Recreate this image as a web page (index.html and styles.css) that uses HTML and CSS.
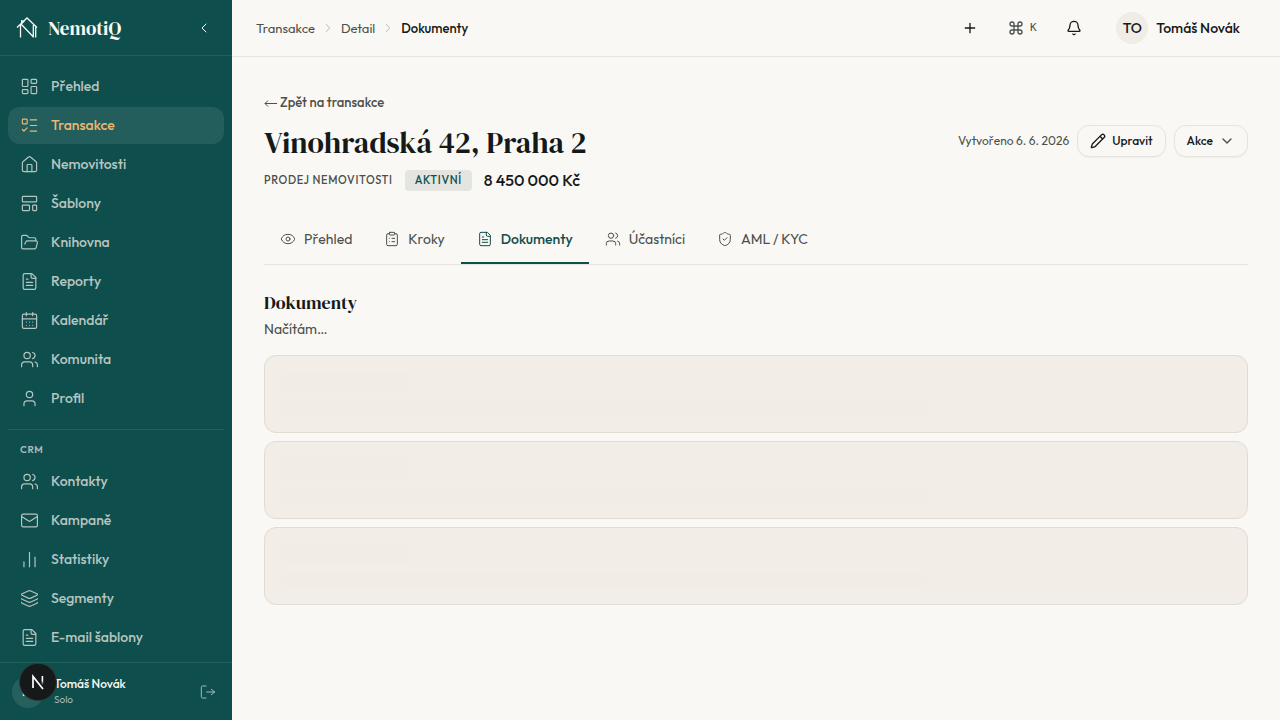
FILE: index.html
```html
<!DOCTYPE html>
<html lang="cs">
<head>
<meta charset="utf-8">
<meta name="viewport" content="width=device-width, initial-scale=1">
<title>NemotiQ – Dokumenty</title>
<link rel="stylesheet" href="styles.css">
</head>
<body>
<svg class="sprite" aria-hidden="true">
  <symbol id="dashboard" viewBox="0 0 24 24"><rect x="3" y="3" width="7" height="9" rx="1"/><rect x="14" y="3" width="7" height="5" rx="1"/><rect x="14" y="12" width="7" height="9" rx="1"/><rect x="3" y="16" width="7" height="5" rx="1"/></symbol>
  <symbol id="todo" viewBox="0 0 24 24"><rect x="3" y="4" width="6" height="6" rx="1"/><path d="m3 17 2 2 4-4M13 5h8M13 12h8M13 19h8"/></symbol>
  <symbol id="house" viewBox="0 0 24 24"><path d="M15 21v-8a1 1 0 0 0-1-1h-4a1 1 0 0 0-1 1v8"/><path d="M3 10a2 2 0 0 1 .709-1.528l7-6a2 2 0 0 1 2.582 0l7 6A2 2 0 0 1 21 10v9a2 2 0 0 1-2 2H5a2 2 0 0 1-2-2z"/></symbol>
  <symbol id="template" viewBox="0 0 24 24"><rect x="3" y="3" width="18" height="7" rx="1"/><rect x="3" y="14" width="9" height="7" rx="1"/><rect x="16" y="14" width="5" height="7" rx="1"/></symbol>
  <symbol id="folder" viewBox="0 0 24 24"><path d="m6 14 1.5-2.9A2 2 0 0 1 9.24 10H20a2 2 0 0 1 1.94 2.5l-1.54 6a2 2 0 0 1-1.95 1.5H4a2 2 0 0 1-2-2V5a2 2 0 0 1 2-2h3.9a2 2 0 0 1 1.69.9l.81 1.2a2 2 0 0 0 1.67.9H18a2 2 0 0 1 2 2v2"/></symbol>
  <symbol id="file" viewBox="0 0 24 24"><path d="M15 2H6a2 2 0 0 0-2 2v16a2 2 0 0 0 2 2h12a2 2 0 0 0 2-2V7Z"/><path d="M14 2v4a2 2 0 0 0 2 2h4M10 9H8M16 13H8M16 17H8"/></symbol>
  <symbol id="calendar" viewBox="0 0 24 24"><rect x="3" y="4" width="18" height="18" rx="2"/><path d="M8 2v4M16 2v4M3 10h18M8 14h.01M12 14h.01M16 14h.01M8 18h.01M12 18h.01M16 18h.01"/></symbol>
  <symbol id="users" viewBox="0 0 24 24"><path d="M16 21v-2a4 4 0 0 0-4-4H6a4 4 0 0 0-4 4v2"/><circle cx="9" cy="7" r="4"/><path d="M22 21v-2a4 4 0 0 0-3-3.87M16 3.13a4 4 0 0 1 0 7.75"/></symbol>
  <symbol id="user" viewBox="0 0 24 24"><path d="M19 21v-2a4 4 0 0 0-4-4H9a4 4 0 0 0-4 4v2"/><circle cx="12" cy="7" r="4"/></symbol>
  <symbol id="mail" viewBox="0 0 24 24"><rect x="2" y="4" width="20" height="16" rx="2"/><path d="m22 7-8.97 5.7a1.94 1.94 0 0 1-2.06 0L2 7"/></symbol>
  <symbol id="chart" viewBox="0 0 24 24"><path d="M5 21v-6M12 21V3M19 21V9"/></symbol>
  <symbol id="layers" viewBox="0 0 24 24"><path d="M12.83 2.18a2 2 0 0 0-1.66 0L2.6 6.08a1 1 0 0 0 0 1.83l8.58 3.91a2 2 0 0 0 1.66 0l8.58-3.9a1 1 0 0 0 0-1.83z"/><path d="M2 12a1 1 0 0 0 .58.91l8.6 3.91a2 2 0 0 0 1.65 0l8.58-3.9A1 1 0 0 0 22 12"/><path d="M2 17a1 1 0 0 0 .58.91l8.6 3.91a2 2 0 0 0 1.65 0l8.58-3.9A1 1 0 0 0 22 17"/></symbol>
  <symbol id="logout" viewBox="0 0 24 24"><path d="m17 16 5-4-5-4M22 12H10M9 21H4a2 2 0 0 1-2-2V5a2 2 0 0 1 2-2h5"/></symbol>
  <symbol id="left" viewBox="0 0 24 24"><path d="m15 18-6-6 6-6"/></symbol>
  <symbol id="right" viewBox="0 0 24 24"><path d="m9 18 6-6-6-6"/></symbol>
  <symbol id="down" viewBox="0 0 24 24"><path d="m6 9 6 6 6-6"/></symbol>
  <symbol id="plus" viewBox="0 0 24 24"><path d="M5 12h14M12 5v14"/></symbol>
  <symbol id="command" viewBox="0 0 24 24"><path d="M15 6v12a3 3 0 1 0 3-3H6a3 3 0 1 0 3 3V6a3 3 0 1 0-3 3h12a3 3 0 1 0-3-3"/></symbol>
  <symbol id="bell" viewBox="0 0 24 24"><path d="M10.27 21a2 2 0 0 0 3.46 0M3.26 15.33A1 1 0 0 0 4 17h16a1 1 0 0 0 .74-1.67C19.41 13.96 18 12.5 18 8A6 6 0 0 0 6 8c0 4.5-1.41 5.96-2.74 7.33"/></symbol>
  <symbol id="pencil" viewBox="0 0 24 24"><path d="M21.17 6.81a1 1 0 0 0-3.99-3.99L3.84 16.17a2 2 0 0 0-.5.83l-1.32 4.35a.5.5 0 0 0 .62.62l4.35-1.32a2 2 0 0 0 .83-.5zM15 5l4 4"/></symbol>
  <symbol id="eye" viewBox="0 0 24 24"><path d="M2.06 12.35a1 1 0 0 1 0-.7 10.75 10.75 0 0 1 19.88 0 1 1 0 0 1 0 .7 10.75 10.75 0 0 1-19.88 0"/><circle cx="12" cy="12" r="3"/></symbol>
  <symbol id="clipboard" viewBox="0 0 24 24"><rect x="8" y="2" width="8" height="4" rx="1"/><path d="M16 4h2a2 2 0 0 1 2 2v14a2 2 0 0 1-2 2H6a2 2 0 0 1-2-2V6a2 2 0 0 1 2-2h2M12 11h4M12 16h4M8 11h.01M8 16h.01"/></symbol>
  <symbol id="shield" viewBox="0 0 24 24"><path d="M20 13c0 5-3.5 7.5-7.66 8.95a1 1 0 0 1-.67-.01C7.5 20.5 4 18 4 13V6a1 1 0 0 1 1-1c2 0 4.5-1.2 6.24-2.72a1.17 1.17 0 0 1 1.52 0C14.51 3.81 17 5 19 5a1 1 0 0 1 1 1zM9 12l2 2 4-4"/></symbol>
</svg>
<div class="app">
  <aside class="sidebar">
    <div class="brand">
      <svg class="brand-mark" viewBox="0 0 24 24" aria-hidden="true"><path d="M2 11.500 12 2l10 9.500M5.500 9v12.500M5.500 7.500 18 20.500M18.300 9v12.500M20.700 11v10.500" stroke-width="1.300"/><path d="M6 4v5l4-4z" class="solid"/></svg>
      <span class="brand-name">NemotiQ</span>
      <button class="bare collapse" type="button" aria-label="Sbalit menu"><svg class="icon"><use href="#left"/></svg></button>
    </div>
    <nav class="nav" aria-label="Hlavní menu">
      <a class="nav-item" href="#"><svg class="icon"><use href="#dashboard"/></svg>Přehled</a>
      <a class="nav-item current" href="#" aria-current="page"><svg class="icon"><use href="#todo"/></svg>Transakce</a>
      <a class="nav-item" href="#"><svg class="icon"><use href="#house"/></svg>Nemovitosti</a>
      <a class="nav-item" href="#"><svg class="icon"><use href="#template"/></svg>Šablony</a>
      <a class="nav-item" href="#"><svg class="icon"><use href="#folder"/></svg>Knihovna</a>
      <a class="nav-item" href="#"><svg class="icon"><use href="#file"/></svg>Reporty</a>
      <a class="nav-item" href="#"><svg class="icon"><use href="#calendar"/></svg>Kalendář</a>
      <a class="nav-item" href="#"><svg class="icon"><use href="#users"/></svg>Komunita</a>
      <a class="nav-item" href="#"><svg class="icon"><use href="#user"/></svg>Profil</a>
      <div class="nav-heading">CRM</div>
      <a class="nav-item" href="#"><svg class="icon"><use href="#users"/></svg>Kontakty</a>
      <a class="nav-item" href="#"><svg class="icon"><use href="#mail"/></svg>Kampaně</a>
      <a class="nav-item" href="#"><svg class="icon"><use href="#chart"/></svg>Statistiky</a>
      <a class="nav-item" href="#"><svg class="icon"><use href="#layers"/></svg>Segmenty</a>
      <a class="nav-item" href="#"><svg class="icon"><use href="#file"/></svg>E-mail šablony</a>
    </nav>
    <div class="account">
      <span class="account-avatar">TO</span>
      <div class="account-text"><div class="account-name">Tomáš Novák</div><div class="account-plan">Solo</div></div>
      <button class="bare signout" type="button" aria-label="Odhlásit"><svg class="icon"><use href="#logout"/></svg></button>
    </div>
  </aside>
  <div class="content">
    <header class="topbar">
      <nav class="crumbs" aria-label="Drobečková navigace">
        <a href="#">Transakce</a><svg class="icon"><use href="#right"/></svg>
        <a href="#">Detail</a><svg class="icon"><use href="#right"/></svg>
        <span class="crumb-current">Dokumenty</span>
      </nav>
      <div class="tools">
        <button class="bare tool" type="button" aria-label="Přidat"><svg class="icon"><use href="#plus"/></svg></button>
        <button class="bare search" type="button" aria-label="Hledat, K"><svg class="icon"><use href="#command"/></svg><kbd>K</kbd></button>
        <button class="bare tool" type="button" aria-label="Oznámení"><svg class="icon"><use href="#bell"/></svg></button>
        <button class="bare profile" type="button"><span class="avatar">TO</span>Tomáš Novák</button>
      </div>
    </header>
    <main class="main">
      <a class="back" href="#"><svg class="arrow" viewBox="0 0 14 14" aria-hidden="true"><path d="M13 7.500H1M4 4.500l-3 3 3 3"/></svg>Zpět na transakce</a>
      <div class="heading">
        <div class="summary">
          <h1>Vinohradská 42, Praha 2</h1>
          <div class="meta"><span class="kind">PRODEJ NEMOVITOSTI</span><span class="status">AKTIVNÍ</span><span class="price">8 450 000 Kč</span></div>
        </div>
        <div class="actions">
          <span class="created">Vytvořeno 6. 6. 2026</span>
          <button class="button" type="button"><svg class="icon"><use href="#pencil"/></svg>Upravit</button>
          <button class="button more" type="button">Akce<svg class="icon"><use href="#down"/></svg></button>
        </div>
      </div>
      <nav class="tabs" aria-label="Detail transakce">
        <a class="tab" href="#"><svg class="icon"><use href="#eye"/></svg>Přehled</a>
        <a class="tab" href="#"><svg class="icon"><use href="#clipboard"/></svg>Kroky</a>
        <a class="tab selected" href="#" aria-current="page"><svg class="icon"><use href="#file"/></svg>Dokumenty</a>
        <a class="tab" href="#"><svg class="icon"><use href="#users"/></svg>Účastníci</a>
        <a class="tab" href="#"><svg class="icon"><use href="#shield"/></svg>AML / KYC</a>
      </nav>
      <h2>Dokumenty</h2>
      <p class="loading">Načítám…</p>
      <div class="cards" aria-busy="true">
        <div class="card"><div class="bone short"></div><div class="bone long"></div></div>
        <div class="card"><div class="bone short"></div><div class="bone long"></div></div>
        <div class="card"><div class="bone short"></div><div class="bone long"></div></div>
      </div>
    </main>
  </div>
</div>
<button class="dev-badge" type="button" aria-label="Vývojářské nástroje"><svg viewBox="0 0 36 36"><defs><linearGradient id="fade" x1="0" y1="0" x2="0" y2="1"><stop offset=".5" stop-color="#fff"/><stop offset="1" stop-color="#fff" stop-opacity="0"/></linearGradient></defs><path d="M13 24V12.500L23 25" fill="none" stroke="#fff" stroke-width="1.700"/><rect x="21.600" y="12" width="1.600" height="9" fill="url(#fade)"/></svg></button>
</body>
</html>
```
FILE: styles.css
```css
* { box-sizing: border-box; }
body {
  margin: 0;
  font-family: Outfit, Lato, "Open Sans", sans-serif;
  font-size: 14px;
  line-height: 20px;
  color: #141a1a;
  background: #faf8f4;
}
a { color: inherit; text-decoration: none; }
.sprite { position: absolute; width: 0; height: 0; }
.icon {
  width: 16px;
  height: 16px;
  flex: none;
  fill: none;
  stroke: currentColor;
  stroke-width: 1.5;
  stroke-linecap: round;
  stroke-linejoin: round;
}
.bare {
  display: flex;
  align-items: center;
  justify-content: center;
  padding: 0;
  border: 0;
  background: none;
  color: inherit;
  font: inherit;
}
.app { display: flex; height: 100vh; }

.sidebar {
  display: flex;
  flex-direction: column;
  flex: none;
  width: 232px;
  background: #0e4f4d;
  color: #faf8f4;
}
.brand {
  display: flex;
  align-items: center;
  gap: 9px;
  flex: none;
  height: 56px;
  padding: 0 16px 0 15px;
  border-bottom: 1px solid #20605d;
}
.brand-mark { width: 24px; height: 24px; fill: none; stroke: currentColor; }
.brand-mark .solid { fill: currentColor; stroke: none; }
.brand-name {
  font: 400 19px/24px "DM Serif Display", "Liberation Serif", serif;
}
.collapse { width: 24px; height: 24px; margin-left: auto; }
.nav {
  display: flex;
  flex-direction: column;
  gap: 2px;
  flex: 1;
  min-height: 0;
  padding: 12px 8px;
  overflow: hidden;
}
.nav-item {
  display: flex;
  align-items: center;
  gap: 12px;
  flex: none;
  height: 37px;
  padding: 0 12px;
  border-radius: 12px;
  font-weight: 500;
  line-height: 19px;
  color: #b7c4c0;
}
.nav-item .icon { width: 19px; height: 19px; }
.nav-item.current { color: #e9b872; background: #245e5c; }
.nav-heading {
  flex: none;
  margin-top: 10px;
  padding: 12px 12px 4px;
  border-top: 1px solid #20605d;
  font-size: 10px;
  line-height: 15px;
  font-weight: 600;
  letter-spacing: 0.06em;
  color: #a9bbb8;
}
.account {
  display: flex;
  align-items: center;
  gap: 10px;
  flex: none;
  height: 58px;
  padding: 0 16px 0 12px;
  border-top: 1px solid #20605d;
}
.account-avatar {
  width: 32px;
  height: 32px;
  border-radius: 50%;
  background: #275f5c;
  font-size: 11px;
  line-height: 32px;
  font-weight: 600;
  text-align: center;
}
.account-text { flex: 1; }
.account-name { font-size: 12px; line-height: 16px; font-weight: 500; }
.account-plan { font-size: 10px; line-height: 15px; color: #9fb5b2; }
.signout { color: #a4b9b6; }

.content { flex: 1; min-width: 0; overflow: auto; }
.topbar {
  display: flex;
  align-items: center;
  justify-content: space-between;
  height: 57px;
  padding: 0 24px;
  border-bottom: 1px solid #e6e4df;
}
.crumbs { display: flex; align-items: center; gap: 6px; font-size: 13px; line-height: 20px; color: #4a504d; }
.crumbs .icon { width: 14px; height: 14px; color: #a9b0ac; }
.crumb-current { font-weight: 500; color: #141a1a; }
.tools { display: flex; align-items: center; gap: 16px; color: #141a1a; }
.tools .icon { stroke-width: 2; }
.tool { width: 36px; height: 36px; }
.search { gap: 6px; width: 36px; height: 36px; color: #4a504d; }
.search kbd { font: 11px/18px "DejaVu Sans Mono", monospace; }
.profile { gap: 8px; margin-left: 8px; padding-right: 16px; font-weight: 500; color: #141a1a; }
.avatar {
  width: 32px;
  height: 32px;
  border-radius: 50%;
  background: #f0ece6;
  line-height: 32px;
  text-align: center;
}

.main { padding: 36px 32px; }
.back {
  display: flex;
  align-items: center;
  gap: 2px;
  width: max-content;
  font-size: 13px;
  line-height: 19px;
  font-weight: 500;
  color: #4a504d;
}
.arrow { width: 14px; height: 14px; fill: none; stroke: currentColor; }
.heading { display: flex; align-items: flex-start; justify-content: space-between; margin-top: 11px; }
h1, h2 { margin: 0; font-family: "DM Serif Display", "Liberation Serif", serif; font-weight: 400; }
h1 { font-size: 30px; line-height: 40px; }
.actions { display: flex; align-items: center; gap: 8px; padding-top: 2px; }
.created { font-size: 12px; color: #4a504d; }
.button {
  display: flex;
  align-items: center;
  gap: 6px;
  height: 32px;
  padding: 0 12px;
  border: 1px solid #e6e4df;
  border-radius: 12px;
  background: #faf8f4;
  color: #141a1a;
  font: 500 12px/16px Outfit, Lato, sans-serif;
  box-shadow: 0 1px 1px #0000000a;
}
.button .icon { stroke-width: 2; }
.more .icon { color: #4a504d; }
.meta { display: flex; align-items: center; gap: 12px; margin-top: 5px; }
.kind { font-size: 11px; font-weight: 500; letter-spacing: 0.06em; color: #4a504d; }
.status {
  padding: 2px 10px;
  border-radius: 4px;
  background: #e4e5e1;
  color: #0f4f4d;
  font-size: 11px;
  line-height: 17px;
  font-weight: 500;
  letter-spacing: 0.06em;
}
.price { font-size: 16px; line-height: 24px; font-weight: 500; }
.tabs { display: flex; margin-top: 24px; border-bottom: 1px solid #e6e4df; }
.tab {
  display: flex;
  align-items: center;
  gap: 8px;
  height: 48px;
  padding: 0 16px;
  border-bottom: 2px solid transparent;
  color: #4a504d;
}
.tab.selected { border-color: #0f4f4d; color: #0f4f4d; font-weight: 500; }
h2 { margin-top: 24px; font-size: 18px; line-height: 28px; }
.loading { margin: 2px 0 0; color: #4a504d; }
.cards { display: grid; gap: 8px; margin-top: 16px; }
.card { display: grid; gap: 8px; padding: 16px; border: 1px solid #e0dcd4; border-radius: 12px; background: #f2ede6; }
.bone { border-radius: 6px; background: #f1ece6; }
.short { width: 128px; height: 20px; }
.long { width: 68%; height: 16px; }

.dev-badge {
  position: fixed;
  left: 20px;
  bottom: 20px;
  width: 36px;
  height: 36px;
  padding: 0;
  border: 0;
  border-radius: 50%;
  background: #15191a;
  box-shadow: 0 0 0 1px #303536;
}
.dev-badge svg { display: block; }
```
